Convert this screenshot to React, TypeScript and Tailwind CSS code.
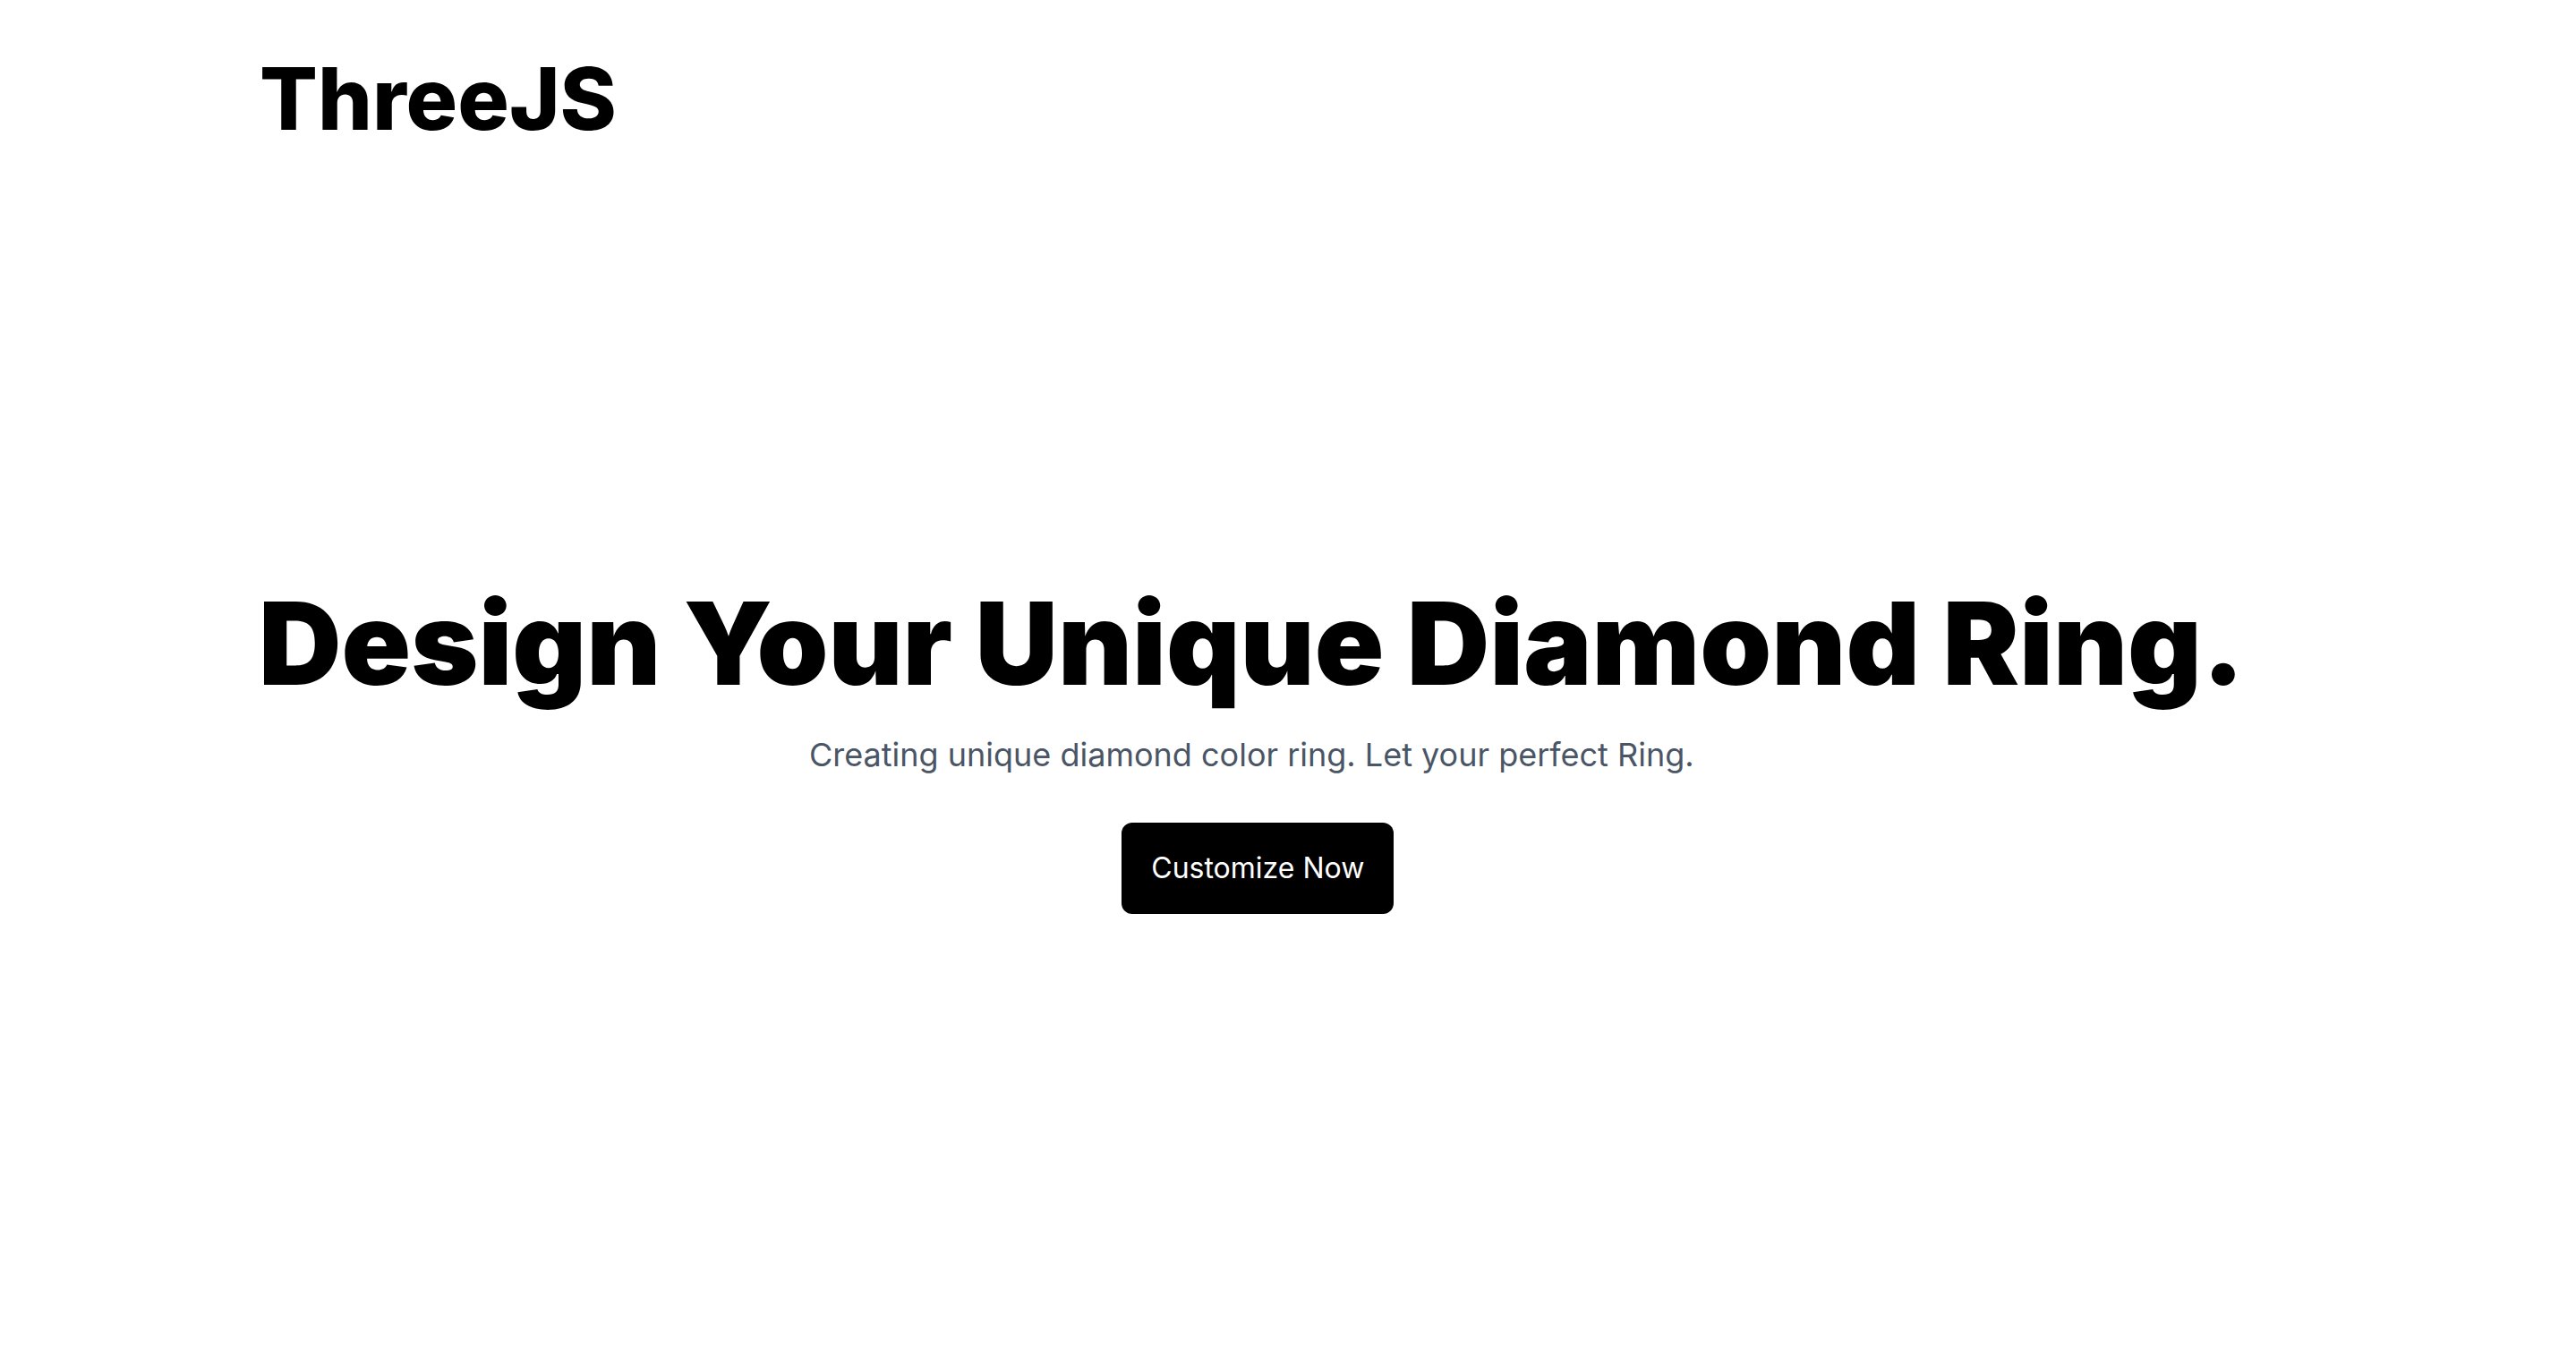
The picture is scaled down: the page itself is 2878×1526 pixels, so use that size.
export default function App() {
  return (
    <div className="min-h-screen bg-white text-black font-['Inter','Liberation_Sans',sans-serif]">
      {/* Nav */}
      <header className="pl-[290px] pt-[62px]">
        <h1 className="text-8xl font-extrabold leading-none">ThreeJS</h1>
      </header>

      {/* Hero */}
      <main className="pl-[289px] pt-[497px]">
        <div className="inline-flex flex-col items-center">
          <h2 className="text-9xl font-black leading-none">
            Design Your Unique Diamond Ring.
          </h2>
          <p className="mt-[33px] text-4xl leading-[54px] text-gray-600">
            Creating unique diamond color ring. Let your perfect Ring.
          </p>
          <button className="ml-[14px] mt-[49px] rounded-xl bg-black px-[33px] py-[28px] text-[32px] leading-[46px] text-white">
            Customize Now
          </button>
        </div>
      </main>
    </div>
  );
}
